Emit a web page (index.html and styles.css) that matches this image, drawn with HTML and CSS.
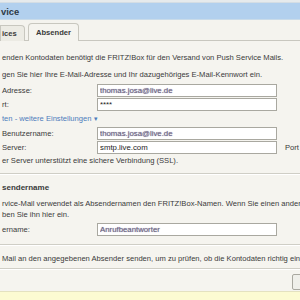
FILE: index.html
```html
<!DOCTYPE html>
<html lang="de">

<head>
    <meta charset="UTF-8">
    <title>Push Service</title>
    <link rel="stylesheet" href="styles.css">
</head>

<body>

    <div class="window">

        <div class="top-strip"></div>

        <div class="title-bar">vice</div>

        <div class="tabs">
            <div class="tab">ices</div>
            <div class="tab active">Absender</div>
        </div>

        <div class="content">
            <p class="intro">enden Kontodaten benötigt die FRITZ!Box für den Versand von Push Service Mails.</p>
            <p class="intro">gen Sie hier Ihre E-Mail-Adresse und Ihr dazugehöriges E-Mail-Kennwort ein.</p>

            <div class="row">
                <label>Adresse:</label>
                <input type="text" class="private" value="thomas.josa@live.de">
            </div>
            <div class="row">
                <label>rt:</label>
                <input type="text" value="****">
            </div>

            <a class="more" href="#">ten - weitere Einstellungen <span class="arrow">&#9662;</span></a>

            <div class="row">
                <label>Benutzername:</label>
                <input type="text" class="private" value="thomas.josa@live.de">
            </div>
            <div class="row">
                <label>Server:</label>
                <input type="text" value="smtp.live.com">
                <span class="port">Port</span>
            </div>

            <p class="hint">er Server unterstützt eine sichere Verbindung (SSL).</p>
        </div>

        <div class="section">
            <h3>sendername</h3>
            <p class="text">rvice-Mail verwendet als Absendernamen den FRITZ!Box-Namen. Wenn Sie einen anderen</p>
            <p class="text">ben Sie ihn hier ein.</p>
            <div class="row">
                <label>ername:</label>
                <input type="text" class="private" value="Anrufbeantworter">
            </div>
        </div>

        <div class="section test">
            <p class="text">Mail an den angegebenen Absender senden, um zu prüfen, ob die Kontodaten richtig eingegeben sind.</p>
        </div>

        <div class="buttons">
            <button>Test</button>
        </div>

        <div class="status-bar"></div>
    </div>

</body>

</html>
```

FILE: styles.css
```css
:root {
    --page-bg: #f5f4ef;
    --line-color: #cfcec6;
    --text-color: #3a3a3a;
}

body {
    background-color: var(--page-bg);
    color: var(--text-color);
    font-family: 'Liberation Sans', Arial, sans-serif;
    font-size: 7.6px;
    margin: 0;
    overflow: hidden;
}

.window {
    height: 300px;
    overflow: hidden;
    width: 300px;
}

.top-strip {
    background-color: #e6eaec;
    border-bottom: 1px solid #d4dde4;
    height: 2px;
}

.title-bar {
    background-color: #b2d0ee;
    border-bottom: 1px solid #c9dbe9;
    color: #2e3a46;
    font-size: 9.4px;
    font-weight: 700;
    height: 16px;
    line-height: 17px;
    padding-left: 1px;
}

/* ====== TABS ====== */

.tabs {
    align-items: flex-end;
    background-color: #f4f3ee;
    border-bottom: 1px solid #c8c7bf;
    display: flex;
    gap: 3px;
    height: 20px;
}

.tab {
    background-color: #ecebe4;
    border: 1px solid #c8c7bf;
    border-bottom: none;
    border-radius: 0 4px 0 0;
    font-weight: 700;
    height: 14px;
    line-height: 15px;
    margin-bottom: -1px;
    padding: 0 5px 1px 1px;
    width: 17px;
}

.tab.active {
    background-color: var(--page-bg);
    border-radius: 4px 4px 0 0;
    height: 16px;
    line-height: 17px;
    padding: 0 0 1px 7px;
    width: 42px;
}

/* ====== CONTENT ====== */

p {
    margin: 0;
}

.content {
    padding: 11px 0 0 2px;
}

.intro {
    height: 11px;
    line-height: 11px;
    margin-bottom: 6px;
}

.intro + .row {
    margin-top: -2px;
}

.row {
    align-items: center;
    display: flex;
    height: 13px;
    margin-bottom: 1px;
}

.row label {
    flex-shrink: 0;
    width: 95px;
}

.row input {
    background-color: white;
    border: 1px solid #a9a8a0;
    box-sizing: border-box;
    color: #222;
    font-family: 'Liberation Sans', Arial, sans-serif;
    font-size: 7.8px;
    height: 13px;
    margin: 0;
    padding: 0 2px;
    width: 180px;
}

.row input.private {
    color: #6d6682;
    text-shadow: 0 0 1px #8d86a8;
}

.port {
    margin-left: 8px;
}

.more {
    color: #4d7cbc;
    display: block;
    height: 11px;
    line-height: 11px;
    margin: 2px 0 3px;
    text-decoration: none;
}

.arrow {
    font-size: 7px;
}

.hint {
    height: 11px;
    line-height: 11px;
    margin-top: 1px;
}

/* ----------------- SECTIONS ----------------- */

.section {
    border-top: 1px solid var(--line-color);
    box-shadow: inset 0 1px 0 #fff;
    margin-top: 7px;
    padding: 8px 0 7px 2px;
}

.section h3 {
    font-size: 8px;
    font-weight: 700;
    height: 11px;
    line-height: 11px;
    margin: 0 0 5px;
}

.section .text {
    height: 11px;
    line-height: 11px;
    white-space: nowrap;
}

.section .row {
    margin-top: 3px;
}

.section.test {
    margin-top: 0;
    padding: 8px 0 4px 2px;
}

.buttons {
    border-top: 1px solid var(--line-color);
    box-shadow: inset 0 1px 0 #fff;
    box-sizing: border-box;
    display: flex;
    height: 23px;
    padding-left: 292px;
    padding-top: 5px;
}

.buttons button {
    background-color: #efefea;
    border: 1px solid #a9a8a0;
    border-radius: 2px;
    font-size: 7.6px;
    height: 16px;
    padding: 0 10px;
}

.status-bar {
    background-color: #fcfbd2;
    border-top: 1px solid #e4e2c0;
    height: 8px;
}
```
